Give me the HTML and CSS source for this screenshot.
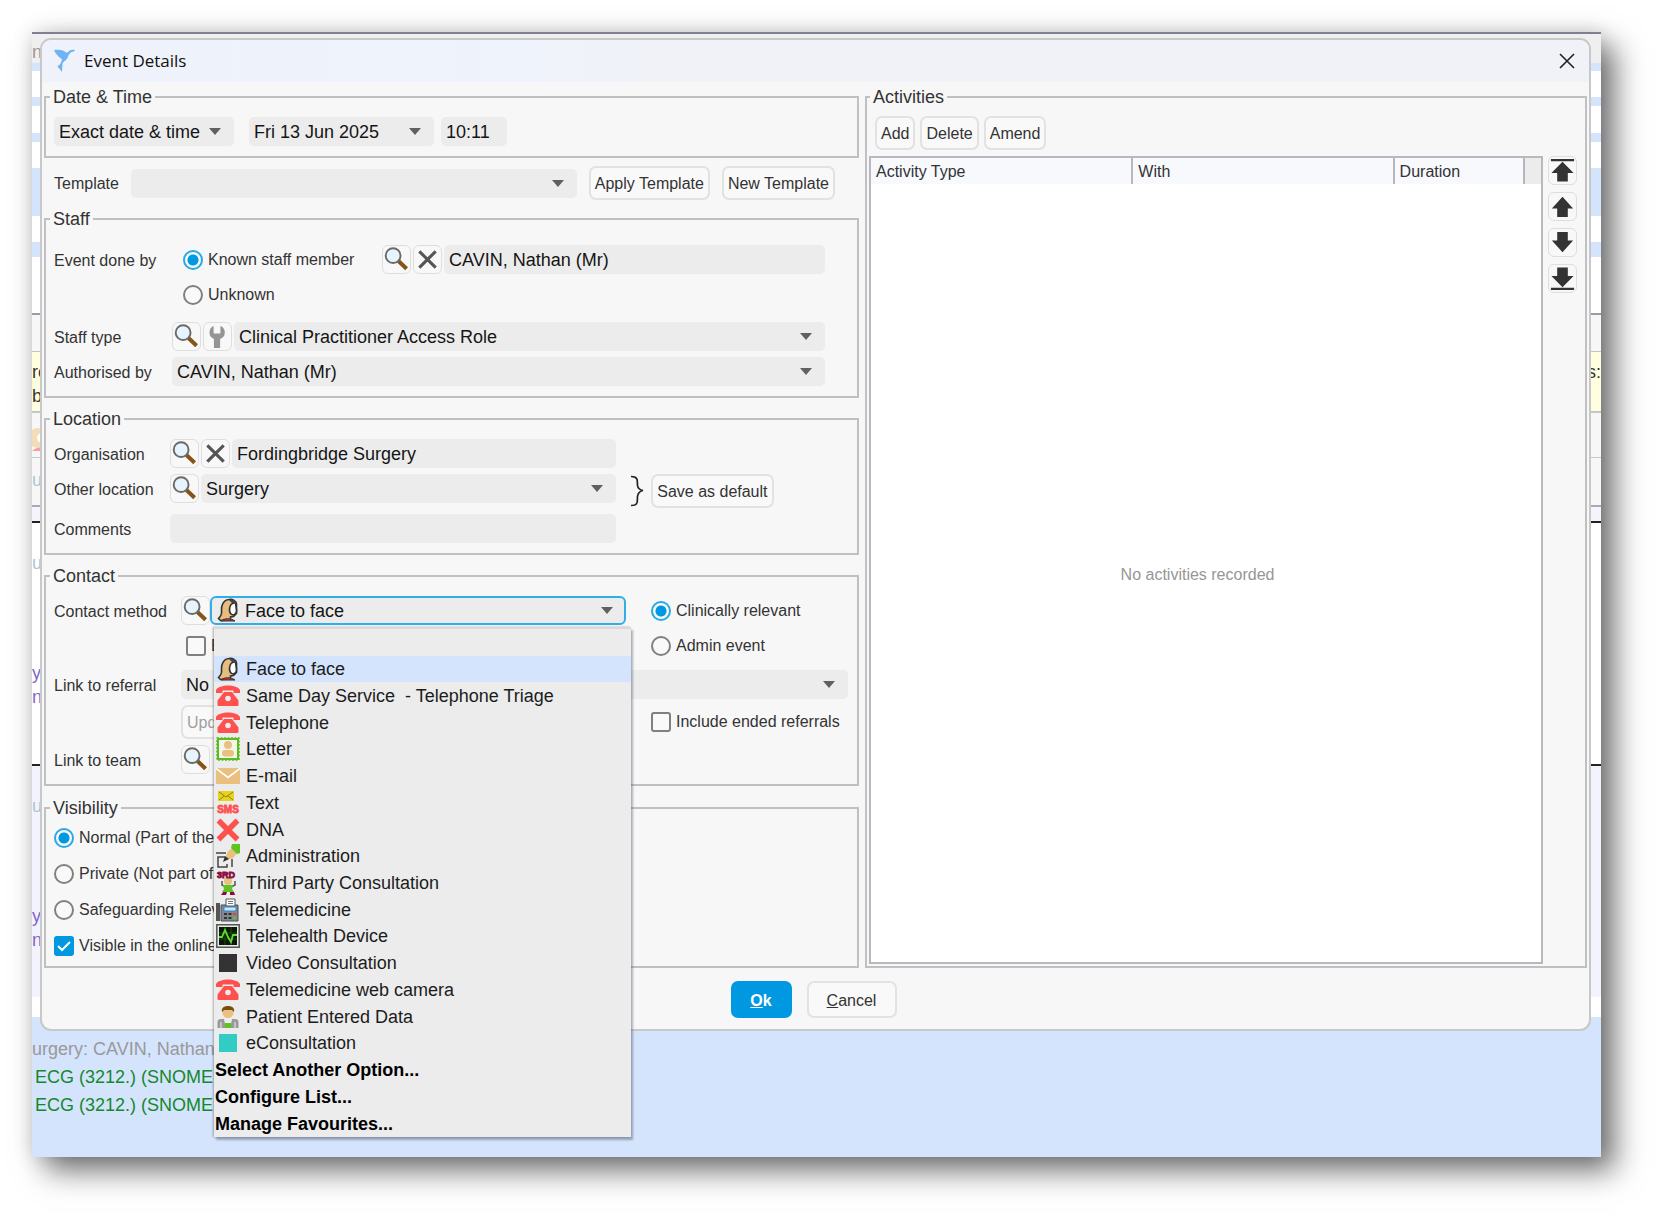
FILE: index.html
```html
<!DOCTYPE html>
<html lang="en">
<head>
<meta charset="utf-8">
<title>Event Details</title>
<link rel="stylesheet" href="styles.css">
</head>
<body>
<svg class="sprite" aria-hidden="true">
  <symbol id="i-search" viewBox="0 0 28 28">
    <path d="M16 15.500 24.500 23.500" stroke="#855416" stroke-width="4.200"/>
    <circle cx="10.500" cy="10" r="7.700" fill="#e6f4fd" stroke="#6a6a6a" stroke-width="2"/>
  </symbol>
  <symbol id="i-cross" viewBox="0 0 28 28"><path d="M5.500 5.500 22.500 22.500M22.500 5.500 5.500 22.500" stroke="#555" stroke-width="3.200"/></symbol>
  <symbol id="i-wrench" viewBox="0 0 28 28"><path d="M10 3v8h7V3c3 1 5 4 4.500 8-.4 3-2 4.500-4.800 5.500V26h-6.400v-9.500C8 15.500 6 14 5.700 11 5.500 7 7 4 10 3z" fill="#959595"/></symbol>
  <symbol id="i-up" viewBox="0 0 28 28"><path d="M14 4 25 16h-5.500v9h-11v-9H3z" fill="#333"/></symbol>
  <symbol id="i-top" viewBox="0 0 28 28"><path d="M2 2h24v2.500H2zM14 5 25.500 16.500h-6v9h-11v-9h-6z" fill="#333"/></symbol>
  <symbol id="i-face" viewBox="0 0 24 24">
    <path d="M2.500 20.500C5 18 6 16 5.500 13 5 8 7 2 13 1.500c4-.5 7 1.500 7.500 4.500v9.500l-3 3-3 .5v3l-10 .500z" fill="#e6bd7e" stroke="#333" stroke-width="1.600"/>
    <path d="M19.500 4.500c-4 .5-6 3.500-6 7 0 3 1 5 3.500 5.500 2.500-.5 3.500-2 3.500-4.500z" fill="#fff" stroke="#333" stroke-width="1.700"/>
    <path d="M5 23c3-3 10-3 14 0z" fill="#d92f2f" stroke="#333"/>
    <path d="M13 2c4-1 7 0 7.500 4L16 5z" fill="#444"/>
  </symbol>
  <symbol id="i-phone" viewBox="0 0 24 24">
    <path d="M0 9V6C3 0 21 0 24 6v3h-6.500V6.500h-11V9z" fill="#ff5050"/>
    <path fill-rule="evenodd" d="M8 8h8l6.500 8.500V21q0 1-1 1h-19q-1 0-1-1v-4.500zM12 11.700a2.800 2.800 0 1 0 0 5.600 2.800 2.800 0 0 0 0-5.600z" fill="#ff5050"/>
  </symbol>
  <symbol id="i-letter" viewBox="0 0 24 24">
    <path d="M2 2h20v20H2z" fill="#f3f7ea" stroke="#5dbb22" stroke-width="2"/>
    <path d="M1 1h22v22H1z" fill="none" stroke="#5dbb22" stroke-width="1.500" stroke-dasharray="2 1.500"/>
    <circle cx="12" cy="8" r="4" fill="#eac080"/><rect x="6" y="13" width="12" height="6.500" rx="3" fill="#eac080"/>
  </symbol>
  <symbol id="i-mail" viewBox="0 0 24 24"><path d="M0 4h24v16H0z" fill="#eac080"/><path d="M0 4.500 12 13.500 24 4.500" fill="none" stroke="#fff" stroke-width="1.600"/></symbol>
  <symbol id="i-text" viewBox="0 0 24 24">
    <path d="M2 0h16v10H2z" fill="#e8d318"/><path d="M3 1 10 6l7-5M3 9l5-4M17 9l-5-4" fill="none" stroke="#8a7f2a"/>
    <text class="glyph" x="12" y="22" font-size="10" fill="#ff5050" stroke="#ff5050" stroke-width=".8">SMS</text>
  </symbol>
  <symbol id="i-dna" viewBox="0 0 24 24"><path d="M2.500 2.500 21.500 21.500M21.500 2.500 2.500 21.500" stroke="#ff5050" stroke-width="5.500"/></symbol>
  <symbol id="i-admin" viewBox="0 0 24 24">
    <path d="M0 9h10M9 13H2v10h9v-3M16 15v8" fill="none" stroke="#444" stroke-width="1.500"/>
    <path d="M8 17 12 7l6-4 4 5-5 6z" fill="#eac080"/><path d="M16 0h8v9l-3 1-6-6z" fill="#5dc420"/><path d="M7 18 9 12l4 3z" fill="#333"/>
  </symbol>
  <symbol id="i-third" viewBox="0 0 24 24">
    <path d="M6 10v4l4 2h5l4-2v-4" fill="none" stroke="#555" stroke-width="1.500"/>
    <circle cx="12" cy="10" r="4" fill="#eac080"/><path d="M7 14h10l-1 4 2 3H6l2-3z" fill="#5dc420"/><path d="M7 21h4l-1 3H5zM14 21h4l1 3h-5z" fill="#8c0a3e"/>
    <text class="glyph" x="10" y="7" font-size="9" fill="#8c0a3e" stroke="#8c0a3e" stroke-width=".8">3RD</text>
  </symbol>
  <symbol id="i-fax" viewBox="0 0 24 24">
    <path d="M0 5h4v18H0z" fill="#555"/><path d="M5 7h17v16H5z" fill="#828790" stroke="#4c5056"/><path d="M10 1h9v7h-9z" fill="#fff" stroke="#555"/>
    <path d="M12 3.500h5M12 5.500h5" stroke="#777"/><path d="M8 9h12v4H8z" fill="#cfe7fb" stroke="#2f87c8"/>
    <path d="M8 15h3v2H8zM12.500 15h3v2h-3zM8 19h3v2H8zM12.500 19h3v2h-3z" fill="#333"/><path d="M17 15h3v2h-3z" fill="#e04040"/><path d="M17 19h3v2h-3z" fill="#5dc420"/>
  </symbol>
  <symbol id="i-device" viewBox="0 0 24 24">
    <path d="M.8.800h22.400v22.400H.8z" fill="#e8e8e8" stroke="#555" stroke-width="1.500"/><path d="M3 3h18v18H3z" fill="#0a1a06"/>
    <path d="M3 9h18M3 15h18M9 3v18M15 3v18" stroke="#245c18" stroke-width=".8"/><path d="M3 13h3l3-7 3 7 3 5 2-7h4" fill="none" stroke="#5edc2c" stroke-width="1.800"/>
  </symbol>
  <symbol id="i-black" viewBox="0 0 24 24"><path d="M3 3h18v18H3z" fill="#333"/></symbol>
  <symbol id="i-teal" viewBox="0 0 24 24"><path d="M3 3h18v18H3z" fill="#33ccc4"/></symbol>
  <symbol id="i-patient" viewBox="0 0 24 24">
    <circle cx="12" cy="7.500" r="5.500" fill="#eac080"/><path d="M6 7C5 3 8 1 12 1s7 2 6 6l-2-2H8z" fill="#7a4c12"/>
    <path d="M1.500 23v-6q0-3 4-3h13q4 0 4 3v6z" fill="#999"/><path d="M8 14h8l-1 5H9z" fill="#eee"/><path d="M9 18h6v5H9z" fill="#5dc420"/><path d="M5 17v6M19 17v6" stroke="#eee"/>
  </symbol>
</svg>

<main class="desktop">
  <div class="record" aria-hidden="true">
    <div class="toolbar">ni</div>
    <div class="stripe s8"></div><div class="gap s26"></div>
    <div class="stripe s9"></div><div class="gap s27"></div>
    <div class="stripe s9"></div><div class="gap s26"></div>
    <div class="stripe s48"></div><div class="gap s26"></div>
    <div class="stripe s15"></div><div class="gap s56"></div>
    <div class="panel s38"></div>
    <div class="note"><p>re<br>b</p><p>s:</p></div>
    <div class="panel s45"><svg class="avatar" viewBox="0 0 24 24"><circle cx="6" cy="11" r="10" fill="#f5dcb9"/><circle cx="10" cy="11" r="5" fill="#fff"/><path d="M0 24q5-5 12-3v3z" fill="#ff9c9c"/></svg></div>
    <div class="panel s48 faint">u</div>
    <div class="gap s16"></div>
    <div class="entry"><p class="faint">u</p><p class="coded">yp<br>n</p></div>
    <div class="entry tinted"><p class="faint">u</p><p class="coded">yp<br>n</p></div>
    <div class="gap s20"></div>
    <div class="latest"><p class="where">urgery: CAVIN, Nathan (</p><p>ECG (3212.) (SNOMED</p><p>ECG (3212.) (SNOMED</p></div>
  </div>

  <section class="dialog" role="dialog" aria-labelledby="dialog-title">
    <header class="titlebar">
      <svg class="logo" viewBox="0 0 22 24" aria-hidden="true"><path d="M0 1c5-1 10 0 13 3 2-2.500 4-4 8-3l-1 1.500c-3 0-5 2-6 5-1 4-4 4-5.500 7L8 23c-1-2-4-4-4.500-6 3-1 4-4 4.500-7C6 9 2 6 0 1z" fill="#6db3f5"/></svg>
      <h1 id="dialog-title">Event Details</h1>
      <button class="close" type="button" aria-label="Close"><svg viewBox="0 0 16 16"><path d="M1 1 15 15M15 1 1 15" stroke="#222" stroke-width="1.600"/></svg></button>
    </header>

    <form class="body">
      <div class="details">
        <fieldset class="group date">
          <legend>Date &amp; Time</legend>
          <div class="row">
            <select class="field exact" aria-label="Date precision"><option>Exact date &amp; time</option></select>
            <select class="field day" aria-label="Date"><option>Fri 13 Jun 2025</option></select>
            <input class="field time" aria-label="Time" value="10:11">
          </div>
        </fieldset>

        <div class="row template">
          <label for="template">Template</label>
          <select class="field grow" id="template"><option></option></select>
          <button class="btn" type="button">Apply Template</button>
          <button class="btn" type="button">New Template</button>
        </div>

        <fieldset class="group staff">
          <legend>Staff</legend>
          <div class="row">
            <span class="name">Event done by</span>
            <label class="choice known"><input type="radio" name="staff" checked>Known staff member</label>
            <button class="icon-btn" type="button" aria-label="Find staff member"><svg><use href="#i-search"/></svg></button>
            <button class="icon-btn" type="button" aria-label="Clear staff member"><svg><use href="#i-cross"/></svg></button>
            <input class="field grow" aria-label="Staff member" value="CAVIN, Nathan (Mr)">
          </div>
          <div class="row">
            <span class="name"></span>
            <label class="choice known"><input type="radio" name="staff">Unknown</label>
          </div>
          <div class="row type">
            <label class="name" for="staff-type">Staff type</label>
            <button class="icon-btn" type="button" aria-label="Find staff type"><svg><use href="#i-search"/></svg></button>
            <button class="icon-btn" type="button" aria-label="Configure staff type"><svg><use href="#i-wrench"/></svg></button>
            <select class="field grow" id="staff-type"><option>Clinical Practitioner Access Role</option></select>
          </div>
          <div class="row">
            <label class="name" for="authorised">Authorised by</label>
            <select class="field grow" id="authorised"><option>CAVIN, Nathan (Mr)</option></select>
          </div>
        </fieldset>

        <fieldset class="group location">
          <legend>Location</legend>
          <div class="places">
            <div class="row">
              <label class="name" for="organisation">Organisation</label>
              <button class="icon-btn" type="button" aria-label="Find organisation"><svg><use href="#i-search"/></svg></button>
              <button class="icon-btn" type="button" aria-label="Clear organisation"><svg><use href="#i-cross"/></svg></button>
              <input class="field grow" id="organisation" value="Fordingbridge Surgery">
            </div>
            <div class="row">
              <label class="name" for="other-location">Other location</label>
              <button class="icon-btn" type="button" aria-label="Find location"><svg><use href="#i-search"/></svg></button>
              <select class="field grow" id="other-location"><option>Surgery</option></select>
            </div>
            <div class="row comments">
              <label class="name" for="comments">Comments</label>
              <input class="field grow" id="comments">
            </div>
          </div>
          <svg class="brace" viewBox="0 0 14 32" aria-hidden="true"><path d="M1 1.500c8 0 6 5 6.500 9C8 14 10 15 13 15.500 10 16 8 18 7.500 21.500 7 26 9 30.500 1 30.500" fill="none" stroke="#222" stroke-width="1.700"/></svg>
          <button class="btn" type="button">Save as default</button>
        </fieldset>

        <fieldset class="group contact">
          <legend>Contact</legend>
          <div class="row">
            <label class="name" for="method">Contact method</label>
            <button class="icon-btn" type="button" aria-label="Find contact method"><svg><use href="#i-search"/></svg></button>
            <div class="combo">
              <select class="field" id="method"><option>Face to face</option></select>
              <svg class="combo-icon" aria-hidden="true"><use href="#i-face"/></svg>
              <ul class="menu" role="listbox" aria-label="Contact method">
                <li role="option"></li>
                <li role="option" class="current" aria-selected="true"><svg><use href="#i-face"/></svg>Face to face</li>
                <li role="option"><svg><use href="#i-phone"/></svg>Same Day Service&nbsp; - Telephone Triage</li>
                <li role="option"><svg><use href="#i-phone"/></svg>Telephone</li>
                <li role="option"><svg><use href="#i-letter"/></svg>Letter</li>
                <li role="option"><svg><use href="#i-mail"/></svg>E-mail</li>
                <li role="option"><svg><use href="#i-text"/></svg>Text</li>
                <li role="option"><svg><use href="#i-dna"/></svg>DNA</li>
                <li role="option"><svg><use href="#i-admin"/></svg>Administration</li>
                <li role="option"><svg><use href="#i-third"/></svg>Third Party Consultation</li>
                <li role="option"><svg><use href="#i-fax"/></svg>Telemedicine</li>
                <li role="option"><svg><use href="#i-device"/></svg>Telehealth Device</li>
                <li role="option"><svg><use href="#i-black"/></svg>Video Consultation</li>
                <li role="option"><svg><use href="#i-phone"/></svg>Telemedicine web camera</li>
                <li role="option"><svg><use href="#i-patient"/></svg>Patient Entered Data</li>
                <li role="option"><svg><use href="#i-teal"/></svg>eConsultation</li>
                <li role="option" class="action">Select Another Option...</li>
                <li role="option" class="action">Configure List...</li>
                <li role="option" class="action">Manage Favourites...</li>
              </ul>
            </div>
            <label class="choice side"><input type="radio" name="kind" checked>Clinically relevant</label>
          </div>
          <div class="row kind">
            <span class="name"></span>
            <label class="choice grow"><input type="checkbox">E</label>
            <label class="choice side"><input type="radio" name="kind">Admin event</label>
          </div>
          <div class="row referral">
            <label class="name" for="referral">Link to referral</label>
            <select class="field grow" id="referral"><option>No</option></select>
          </div>
          <div class="row update">
            <span class="name"></span>
            <button class="btn" type="button" disabled>Update</button>
            <span class="grow"></span>
            <label class="choice side"><input type="checkbox">Include ended referrals</label>
          </div>
          <div class="row">
            <span class="name">Link to team</span>
            <button class="icon-btn" type="button" aria-label="Find team"><svg><use href="#i-search"/></svg></button>
          </div>
        </fieldset>

        <fieldset class="group visibility">
          <legend>Visibility</legend>
          <label class="choice"><input type="radio" name="visibility" checked>Normal (Part of the</label>
          <label class="choice"><input type="radio" name="visibility">Private (Not part of</label>
          <label class="choice"><input type="radio" name="visibility">Safeguarding Relev</label>
          <label class="choice"><input type="checkbox" checked>Visible in the online</label>
        </fieldset>
      </div>

      <fieldset class="group activities">
        <legend>Activities</legend>
        <div class="row tools">
          <button class="btn" type="button">Add</button>
          <button class="btn" type="button">Delete</button>
          <button class="btn" type="button">Amend</button>
        </div>
        <div class="list">
          <div class="sheet">
            <table>
              <colgroup><col class="c-type"><col class="c-with"><col><col class="c-end"></colgroup>
              <thead><tr><th>Activity Type</th><th>With</th><th>Duration</th><td></td></tr></thead>
            </table>
            <p class="empty">No activities recorded</p>
          </div>
          <div class="order">
            <button class="icon-btn" type="button" aria-label="Move to top"><svg><use href="#i-top"/></svg></button>
            <button class="icon-btn" type="button" aria-label="Move up"><svg><use href="#i-up"/></svg></button>
            <button class="icon-btn flip" type="button" aria-label="Move down"><svg><use href="#i-up"/></svg></button>
            <button class="icon-btn flip" type="button" aria-label="Move to bottom"><svg><use href="#i-top"/></svg></button>
          </div>
        </div>
      </fieldset>
    </form>

    <footer class="actions">
      <button class="btn primary" type="button"><u>O</u>k</button>
      <button class="btn cancel" type="button"><u>C</u>ancel</button>
    </footer>
  </section>
</main>
</body>
</html>
```
FILE: styles.css
```css
* { box-sizing: border-box; }

body {
  margin: 0;
  padding: 32px 65px 65px 32px;
  background: #fff;
  color: #333;
  font: 16px/20px "Liberation Sans", Arial, sans-serif;
}

p, h1, ul { margin: 0; padding: 0; }
button, input, select { font: inherit; color: inherit; margin: 0; }
.sprite { position: absolute; width: 0; height: 0; }
.glyph { font-family: "Liberation Sans", Arial, sans-serif; font-weight: bold; text-anchor: middle; }

/* Patient record behind the dialog */
.desktop {
  position: relative;
  padding: 6px 10px 126px 8px;
  box-shadow: 14px 14px 28px rgba(0, 0, 0, .54), 0 0 20px rgba(0, 0, 0, .14);
}
.record {
  position: absolute;
  inset: 0;
  display: flex;
  flex-direction: column;
  overflow: hidden;
  background: #fff;
  font-size: 18px;
  line-height: 24px;
}
.record > div { flex: none; }
.toolbar { height: 31px; padding-top: 6px; border-top: 2px solid #7f7f8f; background: #efefef; color: #999; }
.stripe { background: #d5e4fd; }
.panel { background: #f7f7f7; border-top: 1px solid #c8c8cc; }
.s8 { height: 8px; } .s9 { height: 9px; } .s15 { height: 15px; } .s16 { height: 16px; }
.s20 { height: 20px; } .s26 { height: 26px; } .s27 { height: 27px; } .s38 { height: 38px; }
.s45 { height: 45px; } .s48 { height: 48px; } .s56 { height: 56px; }
.panel.s38 { border-top: 2px solid #9a9aa4; }
.gap.s16 { border-top: 2px solid #a8a8b8; background: #f4f4fa; }
.note {
  display: flex;
  justify-content: space-between;
  height: 61px;
  padding-top: 8px;
  border-top: 1px solid #c4c4c4;
  border-bottom: 1px solid #c4c4c4;
  background: #ffffdf;
}
.avatar { display: block; width: 24px; height: 24px; margin-top: 14px; }
.faint { color: #a9c6d6; }
.panel.faint { padding-top: 10px; }
.entry { height: 243px; padding-top: 28px; border-top: 2px solid #222; }
.entry.tinted { height: 233px; background: #f3f3fe; }
.coded { margin-top: 86px; color: #7d68cc; }
.record .latest { flex: 1; padding-top: 18px; background: #d5e4fd; color: #14882a; line-height: 28px; }
.latest p { padding-left: 3px; }
.latest .where { padding-left: 0; color: #999; }

/* Dialog frame */
.dialog {
  position: relative;
  border: 2px solid #c8c8ca;
  border-radius: 11px;
  background: #f7f7f7;
}
.titlebar {
  display: flex;
  align-items: center;
  height: 42px;
  padding: 0 14px 0 12px;
  border-radius: 9px 9px 0 0;
  background: linear-gradient(90deg, #eff2fa, #eef3fc 25%, #f1f2f7 45%);
}
.logo { width: 22px; height: 24px; margin-right: 8px; }
h1 { flex: 1; color: #111; font: 17px/24px "Open Sans", "Noto Sans", sans-serif; }
.close { width: 16px; height: 16px; padding: 0; border: 0; background: none; }
.close svg { display: block; }
.body {
  display: grid;
  grid-template-columns: minmax(0, 815fr) minmax(0, 722fr);
  gap: 6px;
  padding: 4px 2px 0;
}
.details { display: flex; flex-direction: column; }
.actions { display: flex; justify-content: center; gap: 15px; padding: 13px 4px 11px 0; }

/* Groups and rows */
.group {
  min-width: 0;
  margin: 0;
  padding: 0 0 10px 8px;
  border: 2px solid #c0c0c2;
}
legend { margin-left: -4px; padding: 0 3px; font-size: 18px; line-height: 22px; }
.row { display: flex; align-items: center; gap: 2px; }
.name, .template label { flex: none; padding-top: 2px; }
.grow { flex: 1; min-width: 0; }

.field {
  display: block;
  width: 100%;
  height: 29px;
  padding: 0 5px;
  border: 0;
  border-radius: 5px;
  background: #ececec;
  color: #151515;
  font-size: 18px;
}
.row > .grow { width: auto; }
input.field { padding-top: 2px; }
select.field {
  appearance: none;
  background: #ececec url("data:image/svg+xml,%3Csvg xmlns='http://www.w3.org/2000/svg' width='12' height='7'%3E%3Cpath d='M0 0h12L6 7z' fill='%23606060'/%3E%3C/svg%3E") no-repeat right 13px center;
}
.btn {
  height: 34px;
  padding: 2px 4px 0;
  border: 2px solid #e2e2e2;
  border-radius: 7px;
  background: #f9f9f9;
  white-space: nowrap;
}
.btn:disabled { color: #a0a0a0; }
.icon-btn {
  flex: none;
  width: 29px;
  height: 29px;
  padding: 0;
  border: 1px solid #dedede;
  border-radius: 6px;
  background: #f8f8f8;
}
.icon-btn svg { display: block; width: 27px; height: 27px; }
.flip svg { transform: scaleY(-1); }

.choice { display: flex; align-items: center; gap: 5px; white-space: nowrap; }
.choice input {
  appearance: none;
  flex: none;
  width: 20px;
  height: 20px;
  border: 2px solid #808080;
  border-radius: 50%;
  background: #f9f9f9;
}
.choice input[type="checkbox"] { border-radius: 3px; }
.choice input[type="radio"]:checked {
  border-color: #26aae6;
  background: radial-gradient(circle, #0098e0 5px, #f9f9f9 6px);
}
.choice input[type="checkbox"]:checked {
  border-color: #0098e0;
  background: #0098e0 url("data:image/svg+xml,%3Csvg xmlns='http://www.w3.org/2000/svg' width='16' height='16'%3E%3Cpath d='M2 8l4 4 8-8' fill='none' stroke='white' stroke-width='2'/%3E%3C/svg%3E") center;
}

/* Date and template */
.date .row { gap: 7px; padding-top: 9px; }
.exact { width: 180px; margin-right: 8px; }
.day { width: 185px; }
.time { width: 66px; }
.template { gap: 12px; margin: 8px 24px 8px 10px; }

/* Staff */
.staff { padding: 15px 32px 10px 8px; }
.staff .row { min-height: 29px; }
.staff .row + .row { margin-top: 6px; }
.staff .name { width: 116px; }
.staff .row.type { margin-top: 13px; }
.known { width: 208px; padding-left: 11px; }

/* Location */
.location { display: grid; grid-template-columns: minmax(0, 559fr) 14px auto minmax(0, 83fr); align-items: center; margin-top: 10px; padding-top: 9px; }
.places { display: grid; gap: 6px; }
.location .name { width: 114px; }
.comments { margin-top: 5px; }
.brace { width: 14px; height: 32px; margin-left: 14px; }
.location > .btn { margin-left: 21px; }

/* Contact */
.contact { margin-top: 10px; padding-top: 9px; }
.contact .name { width: 125px; }
.contact .row { margin-top: 6px; }
.contact legend + .row { margin-top: 0; gap: 0; }
.contact legend + .row .name { width: 127px; }
.side { width: 206px; }
.kind { min-height: 29px; padding: 4px 0; }
.kind .grow { padding-left: 5px; }
.contact .referral { margin-top: 10px; padding-right: 9px; }
.combo { position: relative; flex: 1; margin-right: 25px; }
.combo .field { padding-left: 33px; border: 2px solid #31aee8; border-radius: 6px; background-position: right 11px center; }
.combo-icon { position: absolute; left: 6px; top: 2px; width: 24px; height: 24px; }
.menu {
  position: absolute;
  z-index: 2;
  top: 31px;
  left: 4px;
  right: -5px;
  display: grid;
  grid-auto-rows: 1fr;
  height: 510px;
  border-top: 2px solid #dcd8d8;
  background: #ececec;
  box-shadow: 2px 3px 2px rgba(60, 70, 90, .4), -1px 0 2px rgba(0, 0, 0, .3);
  color: #1c1c1c;
  font-size: 18px;
  list-style: none;
}
.menu li { display: flex; align-items: center; gap: 6px; min-height: 0; padding-left: 2px; white-space: nowrap; }
.menu svg { flex: none; width: 24px; height: 24px; }
.menu .current { background: #d5e4fd; }
.menu .action { padding-left: 1px; color: #000; font-weight: bold; }

/* Visibility */
.visibility { display: flex; flex-direction: column; gap: 16px; margin-top: 11px; padding-top: 9px; }

/* Activities */
.activities { display: flex; flex-direction: column; padding: 8px 8px 2px 2px; }
.activities legend { margin-left: 1px; }
.tools { gap: 5px; padding: 0 6px 6px; }
.tools .btn { height: 34px; }
.list { flex: 1; display: flex; gap: 5px; min-height: 0; }
.sheet { flex: 1; display: flex; flex-direction: column; border: 2px solid #b8b8be; background: #fff; }
table { width: 100%; table-layout: fixed; border-collapse: collapse; }
th { height: 26px; padding: 2px 5px 0; border-right: 2px solid #b8b8bc; background: #f7f9fd; font-weight: normal; text-align: left; }
td { padding: 0; background: #ececec; }
.c-type, .c-with { width: 39%; }
.c-end { width: 17px; }
.empty { flex: 1; display: grid; place-items: center; padding: 3px 17px 0 0; color: #969696; }
.order { display: flex; flex-direction: column; gap: 7px; }

/* Footer buttons */
.actions .btn { height: 37px; }
.actions .primary { width: 61px; border-color: #0098e0; background: #0098e0; color: #fff; font-weight: bold; }
.actions .cancel { width: 90px; }
```
